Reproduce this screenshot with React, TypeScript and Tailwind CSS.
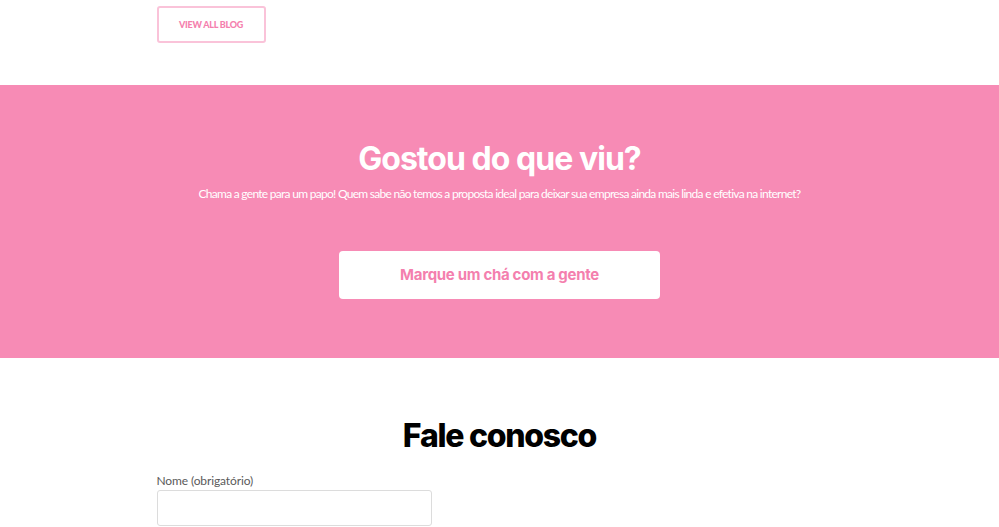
import React from "react";

export default function App() {
  return (
    <div className="w-full bg-white">
      <div className="font-['Lato',sans-serif]">
        {/* Top area */}
        <div className="mx-auto w-[686px] pt-[6px] pb-[42px]">
          <button className="h-[37px] w-[109px] rounded-[3px] border-2 border-[#fac3d9] bg-white text-[9px] font-black uppercase tracking-[-0.03em] text-[#f57fae]">
            View all blog
          </button>
        </div>

        {/* Pink section */}
        <section className="flex h-[273px] flex-col items-center bg-[#f78bb5] pt-[55px]">
          <h2 className="font-['Inter',sans-serif] text-[32px] font-bold leading-[38px] tracking-[-0.03em] text-white">
            Gostou do que viu?
          </h2>
          <p className="mt-[7px] text-[12px] font-normal leading-[18px] tracking-[-0.06em] text-white">
            Chama a gente para um papo! Quem sabe não temos a proposta ideal para deixar sua empresa ainda mais linda e efetiva na internet?
          </p>
          <button className="mt-[48px] h-[48px] w-[321px] rounded-[4px] bg-white font-['Inter',sans-serif] text-[15px] font-bold tracking-[-0.02em] text-[#f47fae]">
            Marque um chá com a gente
          </button>
        </section>

        {/* Contact */}
        <section className="pt-[58px]">
          <h2 className="text-center font-['Inter',sans-serif] text-[32px] font-extrabold leading-[40px] tracking-[-0.04em] text-black">
            Fale conosco
          </h2>
          <div className="mx-auto mt-[16px] w-[686px]">
            <label className="block text-[12px] font-normal leading-[18px] tracking-[-0.01em] text-[#5a5a5a]">
              Nome (obrigatório)
            </label>
            <input className="block h-[36px] w-[275px] rounded-[3px] border border-[#dcdcdc] bg-white" />
          </div>
        </section>
      </div>
    </div>
  );
}
